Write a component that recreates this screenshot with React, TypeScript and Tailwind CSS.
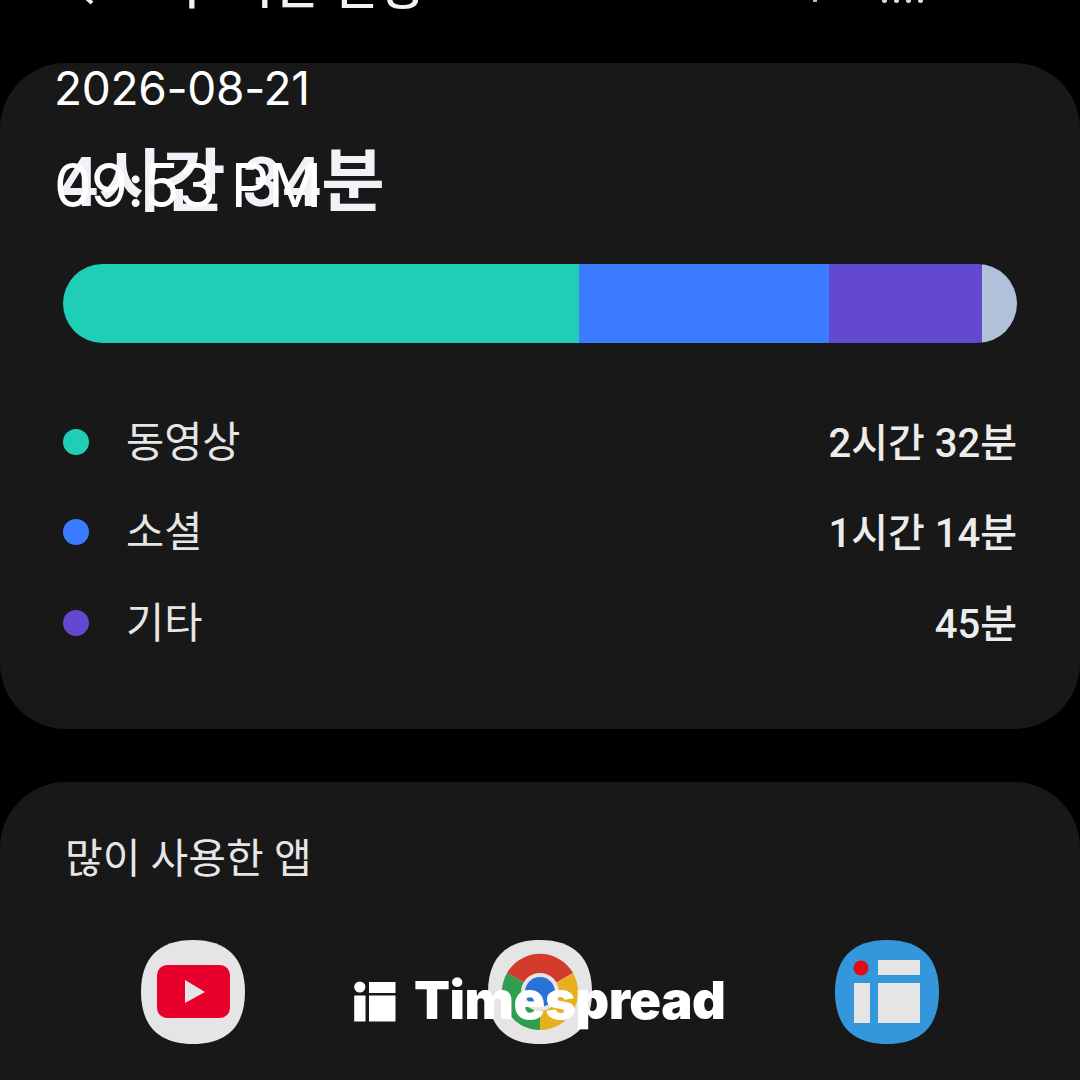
const FONT = { fontFamily: '"Roboto", "Noto Sans CJK KR", sans-serif' };

const LEGEND = [
  { label: "동영상", value: "2시간 32분", dot: "bg-[#1fcfb5]" },
  { label: "소셜", value: "1시간 14분", dot: "bg-[#3a7bff]" },
  { label: "기타", value: "45분", dot: "bg-[#6249d0]" },
];

const TILE = "M52 0C86 0 104 18 104 52S86 104 52 104 0 86 0 52 18 0 52 0Z";

function YoutubeIcon() {
  return (
    <svg width="104" height="104" viewBox="0 0 104 104">
      <path d={TILE} fill="#e5e5e5" />
      <rect x="16" y="25" width="73" height="53" rx="10" fill="#e8002d" />
      <path d="M44 40L64 52 44 63Z" fill="#e5e5e5" />
    </svg>
  );
}

function ChromeIcon() {
  return (
    <svg width="104" height="104" viewBox="0 0 104 104">
      <path d={TILE} fill="#e5e5e5" />
      <path d="M52 52L19 33A38 38 0 0 1 85 33Z" fill="#d33b2c" />
      <path d="M52 52L85 33A38 38 0 0 1 52 90Z" fill="#e8b020" />
      <path d="M52 52L52 90A38 38 0 0 1 19 33Z" fill="#2f9e4f" />
      <circle cx="52" cy="52" r="19" fill="#e5e5e5" />
      <circle cx="52" cy="52" r="15" fill="#2a71d8" />
    </svg>
  );
}

function TimespreadIcon() {
  return (
    <svg width="104" height="104" viewBox="0 0 104 104">
      <path d={TILE} fill="#3497dc" />
      <circle cx="26" cy="28" r="7.5" fill="#e00b12" />
      <rect x="19" y="43" width="16" height="40" fill="#e5e5e5" />
      <rect x="43" y="20" width="42" height="15" fill="#e5e5e5" />
      <rect x="43" y="43" width="42" height="40" fill="#e5e5e5" />
    </svg>
  );
}

function WatermarkMark() {
  return (
    <svg width="42" height="42" viewBox="0 0 42 42">
      <circle cx="5.8" cy="6" r="5.6" fill="#fff" />
      <rect x="0.2" y="14.5" width="11.3" height="26" fill="#fff" />
      <rect x="15" y="1" width="26.5" height="11" fill="#fff" />
      <rect x="15" y="14.5" width="26.5" height="26" fill="#fff" />
    </svg>
  );
}

export default function App() {
  return (
    <div className="relative w-[1080px] h-[1080px] overflow-hidden bg-black text-[#f2f2f2]" style={FONT}>
      {/* header is cut off by the top of the frame, only the bottoms of the glyphs show */}
      <header className="h-[63px] relative">
        <svg className="absolute left-[70px] top-0" width="30" height="6" viewBox="0 0 30 6">
          <path d="M12 -6L22 3" stroke="#f2f2f2" strokeWidth="4" fill="none" />
        </svg>
        <div className="absolute left-[169px] bottom-[51px] text-[50px] leading-[50px] font-medium whitespace-nowrap">
          주 시간 일정
        </div>
        <div className="absolute left-[813px] top-0 flex">
          <span className="w-[4px] h-[2px] bg-[#bbbbbb]" />
          <span className="ml-[65px] w-[5px] h-[3px] rounded-b-full bg-[#dddddd]" />
          <span className="ml-[7px] w-[5px] h-[3px] rounded-b-full bg-[#dddddd]" />
          <span className="ml-[7px] w-[5px] h-[3px] rounded-b-full bg-[#dddddd]" />
          <span className="ml-[7px] w-[5px] h-[3px] rounded-b-full bg-[#dddddd]" />
        </div>
      </header>

      <section className="w-[1080px] h-[666px] rounded-[66px] bg-[#181818] px-[63px] pt-[88px]">
        <div className="text-[69px] leading-[64px] font-semibold text-[#f1f1f8] -ml-[4px]">4시간 34분</div>
        <div className="mt-[49px] h-[79px] flex rounded-full overflow-hidden">
          <div className="w-[516px] bg-[#1fcfb5]" />
          <div className="w-[250px] bg-[#3a7bff]" />
          <div className="w-[153px] bg-[#6249d0]" />
          <div className="flex-1 bg-[#b2c1da]" />
        </div>
        <ul className="mt-[76px] flex flex-col gap-[45.5px]">
          {LEGEND.map((row) => (
            <li key={row.label} className="h-[45px] flex items-center">
              <span className={`w-[26px] h-[26px] rounded-full ${row.dot}`} />
              <span className="ml-[37px] pt-[3px] flex-1 text-[41.5px] text-[#e6e6e6]">{row.label}</span>
              <span className="pt-[4px] text-[40px] font-medium text-[#ececec]">{row.value}</span>
            </li>
          ))}
        </ul>
      </section>

      <section className="w-[1080px] h-[400px] mt-[53px] rounded-[66px] bg-[#181818] px-[65px] pt-[52px]">
        <h2 className="text-[41px] leading-[50px] text-[#e6e6e6]">많이 사용한 앱</h2>
        <div className="mt-[56px] pl-[76px] flex gap-[243px]">
          <YoutubeIcon />
          <ChromeIcon />
          <TimespreadIcon />
        </div>
      </section>

      {/* date stamp and watermark sit over the screenshot */}
      <div className="absolute left-[54px] top-[62px] text-white font-['Inter']">
        <div className="text-[46px] leading-[52px] tracking-[-0.3px]">2026-08-21</div>
        <div className="mt-[36px] text-[60px] leading-[70px] tracking-[-1px]">09:53 PM</div>
      </div>
      <div className="absolute left-[354px] top-[973px] flex items-center gap-[18px] text-white">
        <WatermarkMark />
        <span className="mb-[4px] text-[52.5px] leading-[54px] font-black font-['Inter'] tracking-[-0.5px]">Timespread</span>
      </div>
    </div>
  );
}
